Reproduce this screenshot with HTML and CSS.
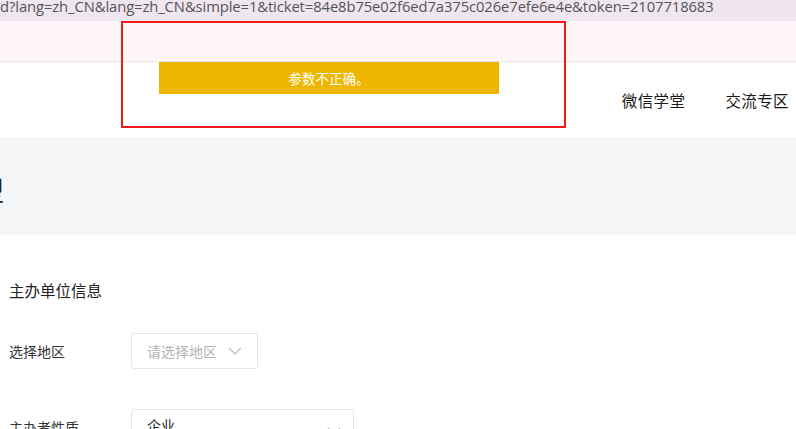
FILE: index.html
```html
<!DOCTYPE html>
<html lang="zh-CN">
<head>
<meta charset="utf-8">
<title>参数不正确</title>
<link rel="stylesheet" href="styles.css">
</head>
<body>
<div class="urlbar"><span class="url">d?lang=zh_CN&amp;lang=zh_CN&amp;simple=1&amp;ticket=84e8b75e02f6ed7a375c026e7efe6e4e&amp;token=2107718683</span></div>
<div class="notice-band"></div>
<header class="header">
  <div class="toast">参数不正确。</div>
  <nav class="nav">
    <a class="nav-item">微信学堂</a>
    <a class="nav-item">交流专区</a>
  </nav>
</header>
<div class="highlight"></div>
<section class="title-band">
  <h1 class="page-title">型</h1>
</section>
<main class="form">
  <h2 class="section-title">主办单位信息</h2>
  <div class="row">
    <label class="row-label">选择地区</label>
    <div class="select select-region">
      <span class="placeholder">请选择地区</span>
      <svg class="chev" width="14" height="8" viewBox="0 0 14 8"><path d="M1 1 L7 7 L13 1" fill="none" stroke="#b9bcc2" stroke-width="1.2"/></svg>
    </div>
  </div>
  <div class="row row-2">
    <label class="row-label">主办者性质</label>
    <div class="select select-type">
      <span class="value">企业</span>
      <svg class="chev chev-wide" width="14" height="8" viewBox="0 0 14 8"><path d="M1 1 L7 7 L13 1" fill="none" stroke="#b9bcc2" stroke-width="1.2"/></svg>
    </div>
  </div>
</main>
</body>
</html>
```

FILE: styles.css
```css
html, body {
  margin: 0;
  padding: 0;
  width: 796px;
  height: 429px;
  overflow: hidden;
  background: #ffffff;
  font-family: "Noto Sans CJK SC", "Noto Sans", sans-serif;
  color: #353535;
}

.urlbar {
  height: 21px;
  overflow: hidden;
  background: #f0e6f0;
  white-space: nowrap;
}

.url {
  display: block;
  margin-top: -5px;
  line-height: 22px;
  font-family: "Open Sans", "Liberation Sans", sans-serif;
  font-size: 14.8px;
  color: #555555;
  letter-spacing: -0.1px;
}

.notice-band {
  height: 40px;
  background: #fdf5f8;
  border-bottom: 1px solid #ede2ea;
}

.header {
  position: relative;
  height: 75px;
  display: flex;
  justify-content: flex-end;
  align-items: center;
  padding-right: 7px;
}

.toast {
  position: absolute;
  left: 159px;
  top: 0;
  width: 340px;
  height: 32px;
  background: #eeb600;
  color: #ffffff;
  font-size: 13.5px;
  line-height: 32px;
  text-align: center;
}

.nav {
  display: flex;
  gap: 40px;
  margin-top: 1px;
}

.nav-item {
  font-size: 15.5px;
  color: #1a1a1a;
  letter-spacing: 0.4px;
}

.highlight {
  position: absolute;
  left: 121px;
  top: 21px;
  width: 441px;
  height: 103px;
  border: 2px solid #f01c1c;
}

.title-band {
  height: 98px;
  background: #f5f6f8;
  display: flex;
  align-items: center;
}

.page-title {
  margin: 6px 0 0 -22px;
  font-size: 26px;
  font-weight: 400;
  color: #222222;
}

.form {
  padding: 43px 0 0 9px;
}

.section-title {
  margin: 0;
  font-size: 15.5px;
  font-weight: 400;
  line-height: 24px;
  color: #222222;
}

.row {
  display: flex;
  align-items: center;
  margin-top: 31px;
}

.row-2 {
  margin-top: 40px;
  align-items: flex-start;
}

.row-label {
  width: 122px;
  font-size: 14px;
  color: #353535;
  white-space: nowrap;
}

.row-2 .row-label {
  padding-top: 8px;
}

.select {
  box-sizing: border-box;
  height: 36px;
  border: 1px solid #e4e6eb;
  border-radius: 3px;
  display: flex;
  align-items: center;
  padding: 0 12px 0 15px;
  font-size: 14px;
  white-space: nowrap;
}

.select-region {
  width: 127px;
  gap: 11px;
}

.select-type {
  width: 223px;
  justify-content: space-between;
  align-items: flex-start;
  padding-top: 5px;
}

.placeholder {
  color: #b3b3b3;
}

.value {
  color: #222222;
}

.chev {
  flex: none;
}

.chev-wide {
  margin-top: 12px;
}
```
